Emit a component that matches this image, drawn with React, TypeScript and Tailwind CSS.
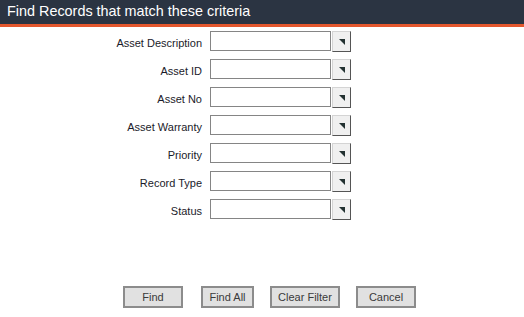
const fields = ["Asset Description", "Asset ID", "Asset No", "Asset Warranty", "Priority", "Record Type", "Status"];

const buttons = [{
  label: "Find",
  cls: "w-[60px]"
}, {
  label: "Find All",
  cls: "w-[53px] ml-[2px]"
}, {
  label: "Clear Filter",
  cls: "w-[70px]"
}, {
  label: "Cancel",
  cls: "w-[60px]"
}];

function Dropdown() {
  return <div className="flex items-start">
      <div className="w-[121px] h-[20px] border border-[#858585] bg-white" />
      <div className="ml-[1px] w-[19px] h-[21px] bg-[#f0f0f0] border-t border-l border-[#d4d4d4] border-r border-b border-r-[#555555] border-b-[#555555] flex items-center justify-center">
        <svg width="8" height="8" viewBox="0 0 8 8" className="ml-[1px]">
          <polygon points="1,1 7,1 7,7" fill="#233232" />
        </svg>
      </div>
    </div>;
}

export default function App() {
  return <div className="w-[524px] h-[317px] bg-white flex flex-col font-['Liberation_Sans',Arial,sans-serif]">
      <div className="h-[24px] bg-[#2b3442] flex items-center pl-[7px] text-white text-[14.4px]">
        Find Records that match these criteria
      </div>
      <div className="h-[3px] bg-[#e4572e]" />
      <div className="flex flex-col gap-[7px] pt-[4px]">
        {fields.map(f => <div key={f} className="flex items-center h-[21px]">
            <label className="w-[202px] text-right text-[11px] text-[#1b1b2a] mt-[4px]">{f}</label>
            <div className="ml-[8px]">
              <Dropdown />
            </div>
          </div>)}
      </div>
      <div className="flex gap-[16px] pl-[123px] mt-auto mb-[9px]">
        {buttons.map(b => <button key={b.label} className={b.cls + " h-[22px] bg-[#e1e1e1] border-2 border-[#8c8c8c] text-[11px] text-[#3a3a3a] flex items-center justify-center"}>
            {b.label}
          </button>)}
      </div>
    </div>;
}
